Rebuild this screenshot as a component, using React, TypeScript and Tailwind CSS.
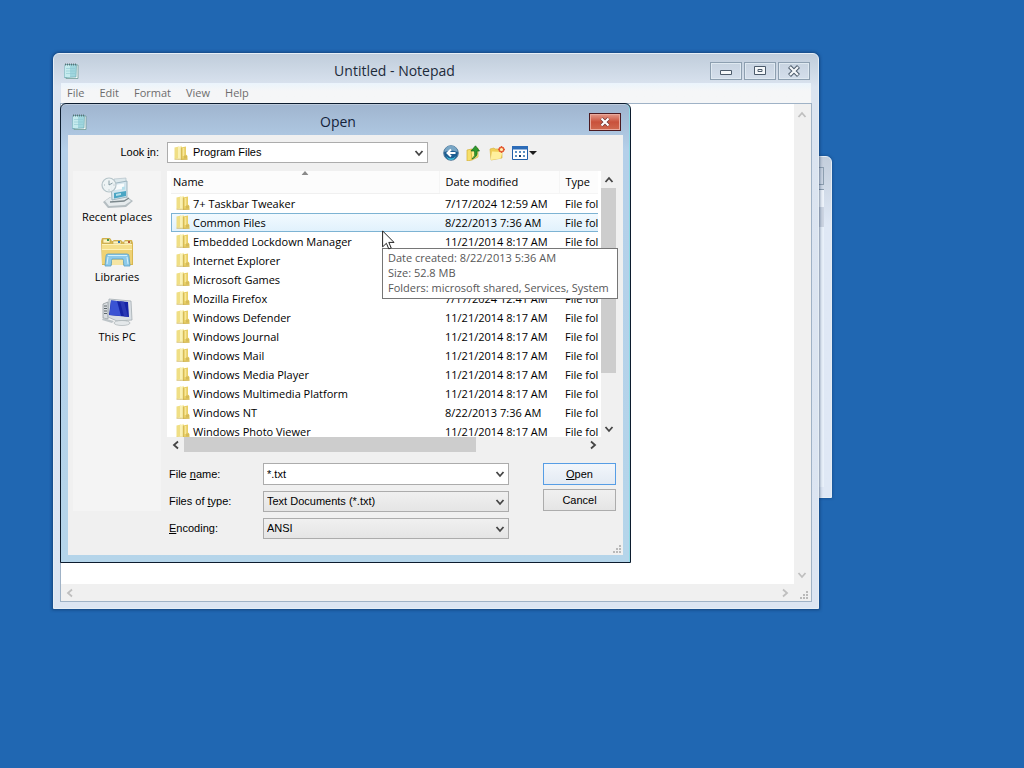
import React from "react";

const files = [
  { name: "7+ Taskbar Tweaker", date: "7/17/2024 12:59 AM" },
  { name: "Common Files", date: "8/22/2013 7:36 AM", hovered: true },
  { name: "Embedded Lockdown Manager", date: "11/21/2014 8:17 AM" },
  { name: "Internet Explorer", date: "11/21/2014 8:17 AM" },
  { name: "Microsoft Games", date: "11/21/2014 8:17 AM" },
  { name: "Mozilla Firefox", date: "7/17/2024 12:41 AM" },
  { name: "Windows Defender", date: "11/21/2014 8:17 AM" },
  { name: "Windows Journal", date: "11/21/2014 8:17 AM" },
  { name: "Windows Mail", date: "11/21/2014 8:17 AM" },
  { name: "Windows Media Player", date: "11/21/2014 8:17 AM" },
  { name: "Windows Multimedia Platform", date: "11/21/2014 8:17 AM" },
  { name: "Windows NT", date: "8/22/2013 7:36 AM" },
  { name: "Windows Photo Viewer", date: "11/21/2014 8:17 AM" },
];

const NotepadIcon = () => (
  <svg width="16" height="18" viewBox="0 0 16 18" className="shrink-0">
    <path d="M4 3h11v13.5H3z" fill="#f7fbfb" stroke="#6f9a94" strokeWidth=".8" />
    <path d="M2 2.5h11.5L13 15l-11.5.5z" fill="#9fd6de" stroke="#6ba8b0" strokeWidth=".7" />
    <path d="M2 3h5v12H1.7z" fill="#c5ebee" />
    <path d="M3 6.5h9M3 9h9M3 11.5h9" stroke="#8ec8d2" strokeWidth=".6" />
    <path d="M2.5 1.500v2M4.5 1.500v2M6.5 1.500v2M8.5 1.500v2M10.5 1.500v2M12.5 1.500v2" stroke="#4b6266" strokeWidth=".8" />
  </svg>
);

const FolderIcon = () => (
  <svg width="14" height="16" viewBox="0 0 14 16" className="shrink-0">
    <path d="M.5 2.500 5 1.500v12L.5 14z" fill="#f0df85" />
    <path d="M4 2 8 .8v12.400L4 14.500z" fill="#faf1b4" />
    <path d="M7 2.500 12 1.500v8l1.500 1.500v3.500L7 15z" fill="#e8cf66" />
    <path d="M7.300 2.500v12.200" stroke="#cdb04c" strokeWidth=".8" />
    <path d="M9.500 3v8" stroke="#f8e79a" strokeWidth="1.600" />
    <path d="M.5 14.300h13" stroke="#c9ac4e" strokeWidth=".7" />
    <path d="M10 10.500h3v3h-3z" fill="#d6bb58" />
  </svg>
);

const Chevron = ({
  dir = "down",
  className = "text-[#454545]",
}: {
  dir?: "down" | "up" | "left" | "right";
  className?: string;
}) => {
  const paths = {
    down: "M1.5 3l3.5 4 3.5-4",
    up: "M1.5 7l3.5-4 3.5 4",
    left: "M7 1.5L3 5l4 3.5",
    right: "M3 1.5L7 5l-4 3.5",
  };
  return (
    <svg width="10" height="10" viewBox="0 0 10 10" className={className}>
      <path d={paths[dir]} fill="none" stroke="currentColor" strokeWidth="1.8" />
    </svg>
  );
};

const Grip = () => (
  <svg width="10" height="10" viewBox="0 0 10 10" fill="#b9b9b9">
    <path d="M8 1h2v2H8zM8 4h2v2H8zM8 7h2v2H8zM5 4h2v2H5zM5 7h2v2H5zM2 7h2v2H2z" />
  </svg>
);

const RecentIcon = () => (
  <svg width="32" height="32" viewBox="0 0 32 32">
    <path d="M2 26l7-5h17l6 4-7 6-18 1z" fill="#b4bdc1" />
    <path d="M4 25l6-4h15l5 4-6 4-16 1z" fill="#e6ebed" />
    <path d="M9 26l14-1 5-3" fill="none" stroke="#7b878c" strokeWidth="1.3" />
    <path d="M13 3l12-1v4l-12 2z" fill="#dce8ec" stroke="#b3c2c8" strokeWidth=".7" />
    <path d="M10 8l16-3v16l-15 3z" fill="#d5e6ee" stroke="#8fa9b5" strokeWidth=".8" />
    <path d="M14 9l9-1.500v5L14 14z" fill="#f7fbfc" />
    <path d="M13 17l12-2v5l-12 2.500z" fill="#4ba5c3" />
    <path d="M15 18l5-1v2l-5 1zM21 11l3-.5v3l-3 .5z" fill="#b5dfeb" />
    <circle cx="8" cy="9" r="7" fill="#edf3f4" fillOpacity=".92" stroke="#b5c4c9" strokeWidth="1.200" />
    <path d="M8 4.500V9l3.500-2" fill="none" stroke="#7e959e" strokeWidth=".9" />
    <path d="M3 9h1M8 13.500v1M12.500 9h1" stroke="#93a5ac" strokeWidth=".8" />
  </svg>
);

const LibrariesIcon = () => (
  <svg width="34" height="32" viewBox="0 0 34 32">
    <path d="M1 5l1-3h8l2 3h1l1-1h7l2 2h1l1-2h7l1 3v22H2z" fill="#d9b851" />
    <path d="M3 3h7v4H3zM13 5h8v3h-8zM24 5h7v3h-7z" fill="#fff4bd" stroke="#b99e4f" strokeWidth=".6" />
    <path d="M7 3h2v2H7z" fill="#3b9a50" />
    <path d="M18 5h2v2h-2z" fill="#3178b7" />
    <path d="M28 5h2v2h-2z" fill="#b85936" />
    <path d="M2 8h30v20H2z" fill="#f5df8b" />
    <path d="M2 13h30v15H2z" fill="#efd275" />
    <path d="M2 8.500h30M2 13.500h30" stroke="#fdf2b9" />
    <path d="M5 30l1-10q0-2 2-2h19q2 0 2 2l1 10h-6l-1-7H12l-1 7z" fill="#8dcaea" stroke="#5b9fc4" strokeWidth=".8" />
    <path d="M8 19.500h19M8 21l-1 7M27 21l1 7" stroke="#d5f1fc" />
    <path d="M12 24h11v5H12z" fill="#f5e5a4" />
  </svg>
);

const ComputerIcon = () => (
  <svg width="32" height="32" viewBox="0 0 32 32">
    <path d="M2 8l5-2v17l-5-1z" fill="#d9dde0" stroke="#969da1" strokeWidth=".8" />
    <path d="M3 10h3M3 12.500h3M3 15h3M3 17.500h3" stroke="#5e676b" />
    <path d="M8 3l22 2 1 19-15 1-9-4z" fill="#d9dfe4" stroke="#a5adb3" strokeWidth=".8" />
    <path d="M10 4.500l17 1.500 1 15-20-2z" fill="#1524a6" />
    <path d="M10 4.500l6 .5 4 15-11.500-1z" fill="#3a53d3" />
    <path d="M19 5.300l4 .4 4 15-4-.4z" fill="#2a39b4" />
    <path d="M18 24h7v3h-7z" fill="#b5bdc1" />
    <ellipse cx="21" cy="27" rx="8" ry="2.500" fill="#e4e8ea" stroke="#a9b1b5" strokeWidth=".7" />
    <path d="M2 22l11 3-2 2-10-3z" fill="#bdc4c8" />
  </svg>
);

const places = [
  { label: "Recent places", icon: <RecentIcon /> },
  { label: "Libraries", icon: <LibrariesIcon /> },
  { label: "This PC", icon: <ComputerIcon /> },
];

const Toolbar = () => (
  <div className="ml-[15px] flex items-center gap-[7px]">
    <button aria-label="Back">
      <svg width="16" height="16" viewBox="0 0 16 16">
        <circle cx="8" cy="8" r="7.3" fill="#1d5d91" stroke="#587f9e" />
        <path d="M1.5 7a6.5 6.5 0 0 1 13 0q-6-3-13 0z" fill="#79a6c5" />
        <path d="M3 11q5 5 10 0-2 4-5 4t-5-4z" fill="#42c2dc" />
        <path d="M12.5 8h-8M8 4.5L4.5 8 8 11.5" fill="none" stroke="#fff" strokeWidth="2" />
      </svg>
    </button>
    <button aria-label="Up one level">
      <svg width="16" height="16" viewBox="0 0 16 16">
        <path d="M1 5l5-1v11l-5 1z" fill="#f6df69" stroke="#d3af35" strokeWidth=".7" />
        <path d="M5 5l7-2v9l-6 3z" fill="#ffed8c" stroke="#d3af35" strokeWidth=".7" />
        <path d="M6 14q4-3 2.500-8H5l4.500-5.200L13.500 6H11q1 6-5 8z" fill="#2f9a2e" stroke="#17691e" strokeWidth=".7" />
      </svg>
    </button>
    <button aria-label="New folder">
      <svg width="16" height="16" viewBox="0 0 16 16">
        <path d="M1 4l4-1 1 1h7v9L2 15z" fill="#f0cf57" stroke="#d8b646" strokeWidth=".7" />
        <path d="M3 6.500l10.500.5-2 6.500L1.500 15z" fill="#fff09d" />
        <circle cx="12.500" cy="4.500" r="2.300" fill="#fff0b0" stroke="#e45b34" strokeWidth="1.500" />
        <path d="M12.500 1v2M12.500 6v2M9 4.500h2M14 4.500h2" stroke="#e45b34" />
      </svg>
    </button>
    <button aria-label="Views">
      <svg width="25" height="16" viewBox="0 0 25 16">
        <path d="M.5 1.500h15v13H.5z" fill="#fff" stroke="#1f5fa8" />
        <path d="M0 1h16v3.500H0z" fill="#2c6cb8" />
        <path d="M3 6h2v2H3zM7 6h2v2H7zM11 6h2v2h-2zM3 10h2v2H3zM11 10h2v2h-2z" fill="#5b91c2" />
        <path d="M7 10h2v2H7z" fill="#173c69" />
        <path d="M17 6h8l-4 4z" fill="#1c1c1c" />
      </svg>
    </button>
  </div>
);

const FileList = () => (
  <div className="bg-[#f0f0f0]">
    <div className="flex h-[266px]">
      <div className="min-w-0 flex-1 overflow-hidden border-r-3 border-white bg-white pl-1">
        <table className="w-[500px] table-fixed border-collapse text-left font-['Open_Sans',sans-serif] text-[11px]">
          <colgroup>
            <col className="w-[268px]" />
            <col className="w-[120px]" />
            <col />
          </colgroup>
          <thead>
            <tr className="h-[22px] bg-[#fcfcfc]">
              <th className="relative border-b border-[#f0f0f0] pl-0.5 font-normal">
                Name
                <svg width="7" height="4" viewBox="0 0 7 4" className="absolute top-0 left-1/2 -translate-x-1/2">
                  <path d="M0 4L3.500 0 7 4z" fill="#8a8a8a" />
                </svg>
              </th>
              <th className="border-b border-l border-[#f5f5f5] pl-1.5 font-normal">Date modified</th>
              <th className="border-b border-l border-[#f5f5f5] pl-1.5 font-normal">Type</th>
            </tr>
          </thead>
          <tbody>
            {files.map((file) => (
              <tr
                key={file.name}
                className={
                  file.hovered
                    ? "h-[19px] bg-linear-to-b from-[#f3faff] to-[#e0f1fc] outline-1 -outline-offset-1 outline-[#7db3d3]"
                    : "h-[19px]"
                }
              >
                <td>
                  <div className="flex items-center gap-[3px] pl-[5px] leading-[19px]">
                    <FolderIcon />
                    {file.name}
                  </div>
                </td>
                <td className="pl-1.5 leading-[19px] whitespace-nowrap">{file.date}</td>
                <td className="pl-1.5 leading-[19px] whitespace-nowrap">File folder</td>
              </tr>
            ))}
          </tbody>
        </table>
      </div>
      <div className="flex w-[15px] flex-col items-center">
        <div className="flex h-[17px] items-center">
          <Chevron dir="up" />
        </div>
        <div className="h-[185px] w-full bg-[#cdcdcd]" />
        <div className="mt-auto flex h-[17px] items-center">
          <Chevron />
        </div>
      </div>
    </div>
    <div className="flex h-[15px] items-center pr-[15px]">
      <div className="flex w-[17px] justify-center">
        <Chevron dir="left" />
      </div>
      <div className="h-full w-[292px] bg-[#cdcdcd]" />
      <div className="ml-auto flex w-[17px] justify-center">
        <Chevron dir="right" />
      </div>
    </div>
  </div>
);

const SelectField = ({ id, value }: { id: string; value: string }) => (
  <div className="relative flex h-[21px] items-center">
    <select
      id={id}
      className="h-full w-full appearance-none border border-[#acacac] bg-linear-to-b from-[#f0f0f0] to-[#e5e5e5] pl-[3px]"
    >
      <option>{value}</option>
    </select>
    <Chevron className="pointer-events-none absolute right-1 text-[#454545]" />
  </div>
);

const OpenDialog = () => (
  <section
    aria-label="Open"
    className="absolute top-[103px] left-[60px] w-[571px] rounded-t-md border border-[#0c1c2e] bg-linear-to-b from-[#a0b5cf] via-[#b4cfe9] via-10% to-[#b5d5ea] px-[7px] pb-[7px] shadow-[inset_-1px_0_0_#8edbe6,inset_0_1px_0_#bdcbdc]"
  >
    <header className="flex h-[31px] items-center pt-1 pr-0.5 pl-[3px]">
      <NotepadIcon />
      <h2 className="flex-1 text-center font-['Open_Sans',sans-serif] text-sm text-[#14233a]">Open</h2>
      <button
        aria-label="Close"
        className="flex h-[18px] w-8 items-center justify-center border border-[#4b1a20] bg-linear-to-b from-[#e39a8b] via-[#c9513b] via-50% to-[#d0694f] shadow-[inset_0_0_0_1px_#e9a99c]"
      >
        <svg width="12" height="10" viewBox="0 0 12 10">
          <path d="M2.500 1.500l7 7M9.500 1.500l-7 7" stroke="#6e3737" strokeWidth="3.600" />
          <path d="M2.500 1.500l7 7M9.500 1.500l-7 7" stroke="#fff" strokeWidth="2.200" />
        </svg>
      </button>
    </header>
    <div className="relative bg-[#f0f0f0] pt-[7px] pr-[7px] pb-4 font-['Liberation_Sans',sans-serif] text-[11px] text-black">
      <div className="flex h-[21px] items-center">
        <label htmlFor="look-in" className="w-[99px] pr-2 text-right">
          Look <u>i</u>n:
        </label>
        <div className="relative flex h-full w-[261px] items-center border border-[#acacac] bg-white pl-1.5">
          <FolderIcon />
          <select id="look-in" className="h-full flex-1 appearance-none pl-[5px]">
            <option>Program Files</option>
          </select>
          <Chevron className="pointer-events-none absolute right-[3px] text-[#454545]" />
        </div>
        <Toolbar />
      </div>
      <div className="mt-2 flex">
        <nav className="mr-1.5 mb-7 ml-[5px] flex w-[88px] flex-col gap-[11px] bg-[#f4f4f4] pt-[5px]">
          {places.map((place) => (
            <button
              key={place.label}
              className="flex flex-col items-center gap-px font-['Open_Sans',sans-serif] text-[11px] leading-4 whitespace-nowrap"
            >
              {place.icon}
              {place.label}
            </button>
          ))}
        </nav>
        <div className="min-w-0 flex-1">
          <FileList />
          <form className="mt-[11px] flex items-start justify-between">
            <div className="grid grid-cols-[94px_246px] items-center gap-y-1.5 pl-0.5">
              <label htmlFor="file-name">
                File <u>n</u>ame:
              </label>
              <div className="flex h-[22px] items-center border border-[#acacac] bg-white">
                <input id="file-name" defaultValue="*.txt" className="h-full min-w-0 flex-1 pl-[3px] outline-none" />
                <button type="button" aria-label="Recent names" className="mr-[3px]">
                  <Chevron />
                </button>
              </div>
              <label htmlFor="file-type">
                Files of <u>t</u>ype:
              </label>
              <SelectField id="file-type" value="Text Documents (*.txt)" />
              <label htmlFor="encoding">
                <u>E</u>ncoding:
              </label>
              <SelectField id="encoding" value="ANSI" />
            </div>
            <div className="flex w-[73px] flex-col gap-1">
              <button
                type="button"
                className="h-[22px] border border-[#569de5] bg-linear-to-b from-[#f2f6fb] to-[#e3eaf3]"
              >
                <u>O</u>pen
              </button>
              <button
                type="button"
                className="h-[22px] border border-[#acacac] bg-linear-to-b from-[#f0f0f0] to-[#e5e5e5]"
              >
                Cancel
              </button>
            </div>
          </form>
        </div>
      </div>
      <div className="absolute right-0.5 bottom-px">
        <Grip />
      </div>
    </div>
  </section>
);

const captionButton =
  "flex h-[18px] w-8 items-center justify-center border border-[#8d9fb0] text-[#4c5b6b] shadow-[inset_0_0_0_1px_#dfe9f1]";

const NotepadWindow = () => (
  <section
    aria-label="Untitled - Notepad"
    className="absolute top-[53px] right-[205px] left-[53px] rounded-t-md border border-[#e6eef5] bg-linear-to-b from-[#c0cddb] via-[#dbe4f0] via-6% to-[#dce5f2] px-[6px] pb-[6px] shadow-[0_0_3px_1px_rgba(10,35,75,0.5)]"
  >
    <header className="flex h-[29px] items-center pt-1 pr-0.5 pl-[3px]">
      <NotepadIcon />
      <h1 className="flex-1 text-center font-['Open_Sans',sans-serif] text-sm text-[#1c2a3a]">
        Untitled - Notepad
      </h1>
      <div className="flex gap-0.5">
        <button aria-label="Minimize" className={captionButton}>
          <svg width="12" height="12" viewBox="0 0 12 12">
            <path d="M.5 5.500h11v4H.5z" fill="#f5f8fa" stroke="currentColor" />
          </svg>
        </button>
        <button aria-label="Maximize" className={captionButton}>
          <svg width="12" height="12" viewBox="0 0 12 12">
            <path d="M.5 1.500h11v8H.5z" fill="#f5f8fa" stroke="currentColor" />
            <path d="M4 4.500h4v2H4z" fill="none" stroke="currentColor" />
          </svg>
        </button>
        <button aria-label="Close" className={captionButton}>
          <svg width="14" height="12" viewBox="0 0 14 12">
            <path d="M2.500 1.500l9 9M11.500 1.500l-9 9" stroke="currentColor" strokeWidth="4.200" />
            <path d="M3 2l8 8M11 2l-8 8" stroke="#f5f8fa" strokeWidth="2.200" />
          </svg>
        </button>
      </div>
    </header>
    <nav className="mx-px flex h-5 items-center gap-[15px] bg-linear-to-b from-[#eaf4fc] to-[#f5f6f7] to-40% pl-1.5 font-['Open_Sans',sans-serif] text-[11px] text-[#6d6d6d]">
      {["File", "Edit", "Format", "View", "Help"].map((item) => (
        <button key={item}>{item}</button>
      ))}
    </nav>
    <div className="border border-[#9fb2c6] bg-[#f0f0f0]">
      <div className="flex">
        <textarea aria-label="Document" className="block h-[480px] min-w-0 flex-1 resize-none bg-white outline-none" />
        <div className="flex w-[17px] flex-col items-center justify-between pt-1.5 pr-0.5 pb-1">
          <Chevron dir="up" className="text-[#bfbfbf]" />
          <Chevron className="text-[#bfbfbf]" />
        </div>
      </div>
      <div className="flex h-[17px] items-center pl-1">
        <Chevron dir="left" className="text-[#bfbfbf]" />
        <div className="mr-1 ml-auto">
          <Chevron dir="right" className="text-[#bfbfbf]" />
        </div>
        <div className="flex w-[17px] justify-center pt-1">
          <Grip />
        </div>
      </div>
    </div>
  </section>
);

export default function App() {
  return (
    <main className="relative min-h-screen overflow-hidden bg-[#2067b2]">
      <div className="absolute top-[156px] right-[192px] h-[342px] w-[300px] rounded-t-md border border-[#e6eef5] bg-linear-to-b from-[#c3cedc] to-[#dfe8f5] to-20% pt-2.5 pr-[7px] shadow-[0_0_3px_rgba(10,35,75,0.5)]">
        <div className="h-[18px] border border-[#8d9fb0]" />
        <div className="mt-1 h-[18px] border-t border-[#8d9fb0] bg-[#edf3fa]" />
        <div className="h-5 bg-[#ccd5e2]" />
        <div className="h-[260px] bg-[#e9f1fa]" />
      </div>
      <NotepadWindow />
      <OpenDialog />
      <div
        role="tooltip"
        className="absolute top-[248px] left-[382px] border border-[#767676] bg-white pt-px pr-2 pb-[3px] pl-[5px] font-['Open_Sans',sans-serif] text-[11px] leading-[15px] whitespace-nowrap text-[#575757]"
      >
        <p>Date created: 8/22/2013 5:36 AM</p>
        <p>Size: 52.8 MB</p>
        <p>Folders: microsoft shared, Services, System</p>
      </div>
      <svg width="13" height="20" viewBox="0 0 13 20" className="absolute top-[230px] left-[382px]">
        <path d="M.6.9v16l3.800-3.600 2.400 5.600 2.400-1-2.400-5.500H12z" fill="#fff" stroke="#222" />
      </svg>
    </main>
  );
}
